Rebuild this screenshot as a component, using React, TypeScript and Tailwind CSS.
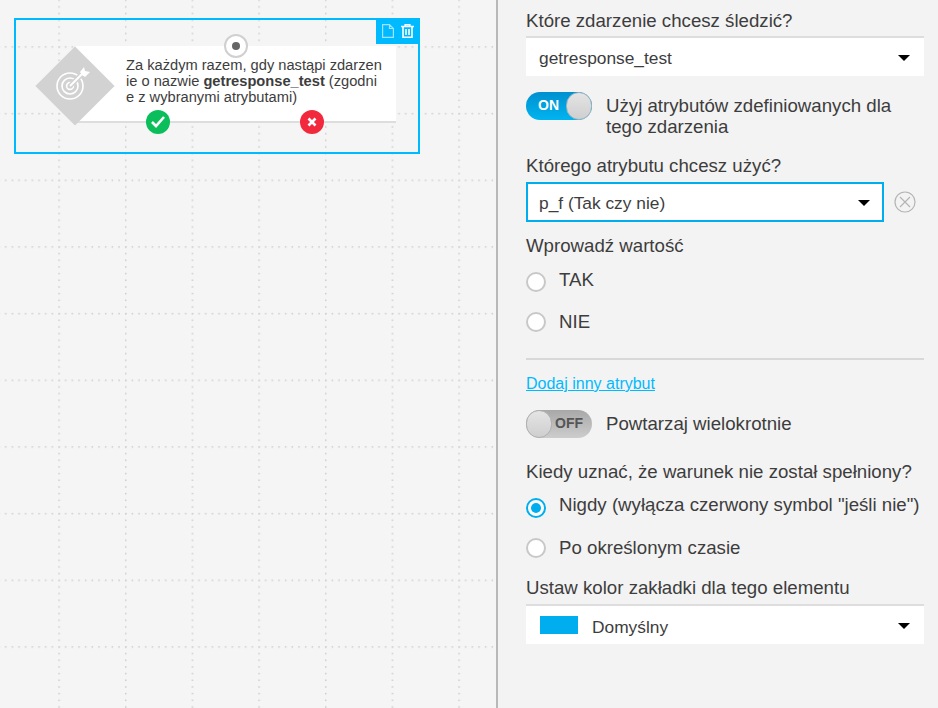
function Caret() {
  return <span className="mt-[2px] h-0 w-0 border-x-[6px] border-t-[6px] border-x-transparent border-t-black" />;
}

function Select({ label, swatch }: { label: string; swatch?: boolean }) {
  return (
    <div className="flex h-[40px] items-center justify-between border-t-2 border-[#dddddd] bg-white pl-[13px] pr-[14px] text-[17.33px]">
      <div className="flex items-center">
        {swatch && <span className="ml-px mr-[14px] h-[18px] w-[38px] bg-[#00aeef]" />}
        <span className={swatch ? "pt-[6px]" : "pt-[4px]"}>{label}</span>
      </div>
      <Caret />
    </div>
  );
}

function Radio({ label, checked, textClass }: { label: string; checked?: boolean; textClass?: string }) {
  return (
    <div className="flex h-[20px] items-center gap-[13px]">
      {checked ? (
        <span className="flex h-5 w-5 items-center justify-center rounded-full border-2 border-[#00aeef] bg-white">
          <span className="h-[10px] w-[10px] rounded-full bg-[#00aeef]" />
        </span>
      ) : (
        <span className="h-5 w-5 rounded-full border-2 border-[#c8c8c8] bg-white" />
      )}
      <span className={textClass}>{label}</span>
    </div>
  );
}

function Toggle({ on }: { on: boolean }) {
  if (on) {
    return (
      <div className="flex h-7 w-[66px] shrink-0 items-center justify-between rounded-full bg-gradient-to-b from-[#0090d0] to-[#00b4f0] pl-[12px]">
        <span className="pb-[2px] text-[14px] font-bold leading-[18px] text-white">ON</span>
        <span className="h-[28px] w-[26px] rounded-full border border-[#9ab4c0] bg-gradient-to-b from-[#e4e4e4] to-[#cfcfcf]" />
      </div>
    );
  }
  return (
    <div className="flex h-7 w-[66px] shrink-0 items-center justify-between rounded-full bg-gradient-to-b from-[#a8a8a8] to-[#cdcdcd] pr-[9px]">
      <span className="h-[28px] w-[26px] rounded-full border border-[#b0b0b0] bg-gradient-to-b from-[#e4e4e4] to-[#cfcfcf]" />
      <span className="pb-[2px] text-[14px] font-bold leading-[18px] text-[#555555]">OFF</span>
    </div>
  );
}

function GridDots() {
  return (
    <svg className="absolute inset-0 h-full w-full" aria-hidden="true">
      <defs>
        <pattern id="dots" x="-8.37" y="-20.47" width="66.667" height="66.667" patternUnits="userSpaceOnUse">
          {Array.from({ length: 10 }).map((_, i) => (
            <rect key={`h${i}`} x={i * 6.667} y="0" width="1.5" height="1.5" fill="#cccccc" />
          ))}
          {Array.from({ length: 10 }).map((_, i) => (
            <rect key={`v${i}`} x="0" y={i * 6.667} width="1.5" height="1.5" fill="#cccccc" />
          ))}
        </pattern>
      </defs>
      <rect width="100%" height="100%" fill="url(#dots)" />
    </svg>
  );
}

function TargetIcon() {
  return (
    <svg width="38" height="38" viewBox="1 2 38 38" fill="none" stroke="#ffffff" className="shrink-0 -rotate-45">
      <circle cx="15" cy="21" r="13" strokeWidth="1.6" />
      <circle cx="15" cy="21" r="8" strokeWidth="1.6" />
      <circle cx="15" cy="21" r="3.4" strokeWidth="1.6" />
      <path d="M15 21 L30 6" stroke="#d2d2d2" strokeWidth="5" />
      <path d="M15 21 L27 9" strokeWidth="2" />
      <path d="M25 7 L29 2 L30 6 L35 7 L30 12 L27 10 Z" fill="#ffffff" stroke="none" />
    </svg>
  );
}

function FlowNode() {
  return (
    <div className="absolute left-[14px] top-[18px] h-[136px] w-[406px] border-2 border-[#00baff] pl-[60px] pt-[26px]">
      <div className="absolute right-[-2px] top-[-2px] flex h-[26px] w-[44px] items-center justify-center gap-[7px] bg-[#00baff]">
        <svg width="12" height="14" viewBox="0 0 12 14" fill="none" stroke="#9fe3ff" strokeWidth="1.2">
          <path d="M0.6 0.6 H7.5 L11.4 4.5 V13.4 H0.6 Z M7.5 0.6 V4.5 H11.4" />
        </svg>
        <svg width="13" height="14" viewBox="0 0 13 14" fill="none" stroke="#ffffff" strokeWidth="1.6">
          <path d="M0 2.5 H13 M4.2 2.5 V0.7 H8.8 V2.5 M2 2.5 V13.2 H11 V2.5 M5 5 V11 M8 5 V11" />
        </svg>
      </div>
      <div className="relative h-[77px] w-[320px] border-b-2 border-[#dddddd] bg-white pl-[50px] pr-[12px] pt-[11px]">
        <div className="absolute left-[-41px] top-0 flex h-20 w-20 items-center justify-center">
          <div className="flex h-14 w-14 shrink-0 rotate-45 items-center justify-center bg-[#d2d2d2]">
            <TargetIcon />
          </div>
        </div>
        <p className="break-all text-[14.67px] leading-[16px] text-[#3d3d3d]">
          Za każdym razem, gdy nastąpi zdarzenie o nazwie <b>getresponse_test</b> (zgodnie z wybranymi atrybutami)
        </p>
        <div className="absolute left-[148px] top-[-12px] flex h-6 w-6 items-center justify-center rounded-full border-2 border-[#d0d0d0] bg-white">
          <span className="h-2 w-2 rounded-full bg-[#666666]" />
        </div>
        <div className="absolute left-[70px] top-[64px] flex h-6 w-6 items-center justify-center rounded-full bg-[#0abf5b]">
          <svg width="16" height="14" viewBox="0 0 16 14" fill="none" stroke="#ffffff" strokeWidth="2.6">
            <path d="M2 7 L6 11 L14 2" />
          </svg>
        </div>
        <div className="absolute left-[224px] top-[64px] flex h-6 w-6 items-center justify-center rounded-full bg-[#f2283c]">
          <svg width="10" height="10" viewBox="0 0 10 10" fill="none" stroke="#ffffff" strokeWidth="2.6">
            <path d="M1.5 1.5 L8.5 8.5 M8.5 1.5 L1.5 8.5" />
          </svg>
        </div>
      </div>
    </div>
  );
}

export default function App() {
  return (
    <div className="flex h-[708px] w-[938px] overflow-hidden font-['Liberation_Sans',Arial,sans-serif] text-[18.67px] text-[#3d3d3d]">
      <div className="relative w-[496px] shrink-0 bg-[#f5f5f5]">
        <GridDots />
        <FlowNode />
      </div>
      <div className="w-[2px] shrink-0 bg-[#b8b8b8]" />
      <div className="flex-1 bg-[#f3f3f3] pl-[28px] pr-[14px] pt-[11px]">
        <div className="leading-[20px]">Które zdarzenie chcesz śledzić?</div>
        <div className="mt-[5px]">
          <Select label="getresponse_test" />
        </div>
        <div className="mt-[16px] flex items-start gap-[14px]">
          <Toggle on />
          <div className="pt-[3px] leading-[21px]">Użyj atrybutów zdefiniowanych dla<br />tego zdarzenia</div>
        </div>
        <div className="mt-[19px] leading-[20px]">Którego atrybutu chcesz użyć?</div>
        <div className="mt-[6px] flex items-center gap-[10px] pr-2">
          <div className="flex h-[40px] flex-1 items-center justify-between border-2 border-[#00aeef] bg-white pl-[11px] pr-[12px] text-[17.33px]">
            <span className="pt-[4px]">p_f (Tak czy nie)</span>
            <Caret />
          </div>
          <svg width="22" height="22" viewBox="0 0 22 22" fill="none" stroke="#b4b4b4" strokeWidth="1.2">
            <circle cx="11" cy="11" r="10" />
            <path d="M6 6 L16 16 M16 6 L6 16" />
          </svg>
        </div>
        <div className="mt-[14px] leading-[20px]">Wprowadź wartość</div>
        <div className="mt-[16px] flex flex-col gap-5">
          <Radio label="TAK" textClass="pb-[4px]" />
          <Radio label="NIE" />
        </div>
        <div className="mt-[26px] h-[2px] bg-[#d8d8d8]" />
        <a className="mt-[15px] block text-[16px] leading-[18px] text-[#00baff] underline">Dodaj inny atrybut</a>
        <div className="mt-[17px] flex items-center gap-[14px]">
          <Toggle on={false} />
          <div className="leading-[20px]">Powtarzaj wielokrotnie</div>
        </div>
        <div className="mt-[24px] leading-[20px]">Kiedy uznać, że warunek nie został spełniony?</div>
        <div className="mt-[16px] flex flex-col gap-5">
          <Radio label={'Nigdy (wyłącza czerwony symbol "jeśli nie")'} textClass="pb-[6px]" checked />
          <Radio label="Po określonym czasie" />
        </div>
        <div className="mt-[20px] leading-[20px]">Ustaw kolor zakładki dla tego elementu</div>
        <div className="mt-[6px]">
          <Select label="Domyślny" swatch />
        </div>
      </div>
    </div>
  );
}
